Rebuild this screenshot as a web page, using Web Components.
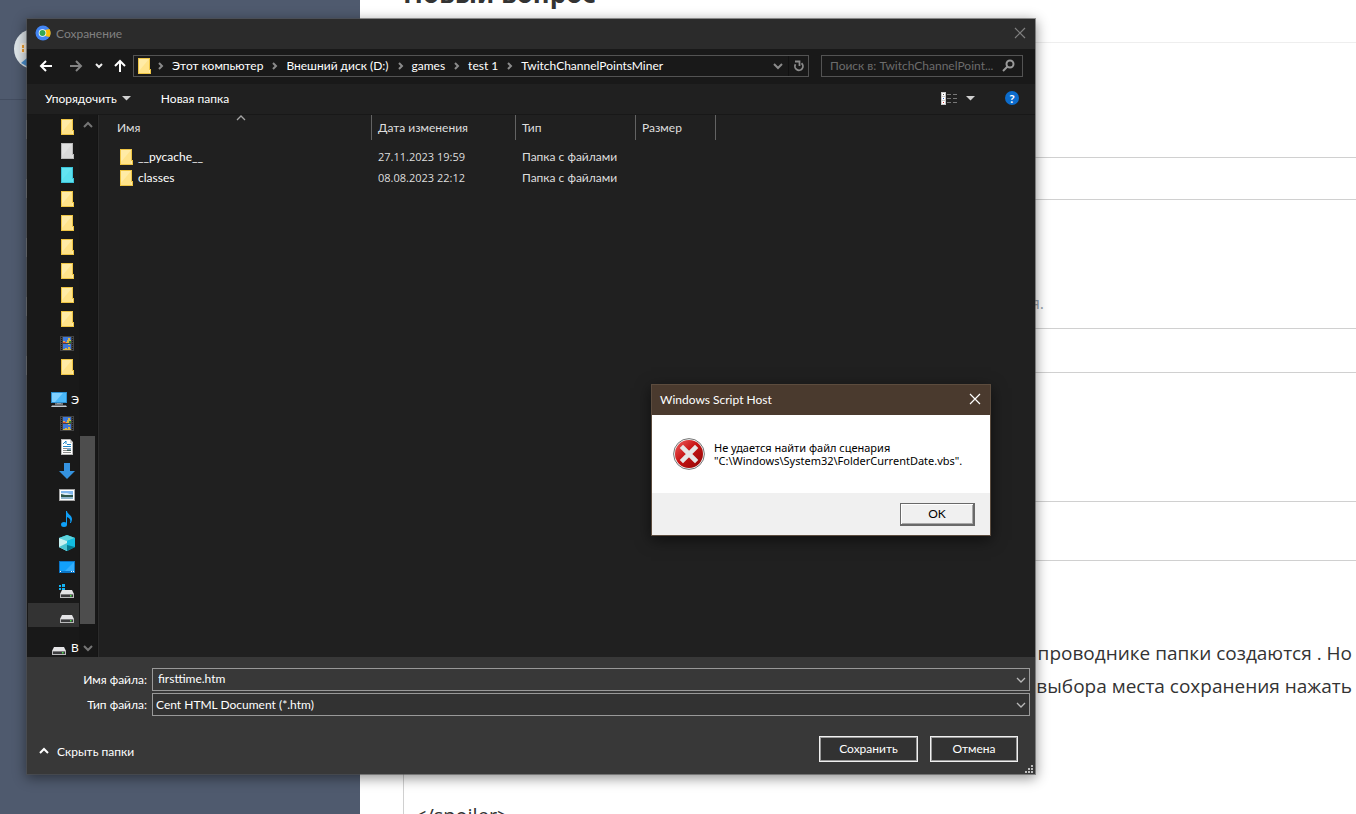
<!DOCTYPE html>
<html lang="ru">
<head>
<meta charset="utf-8">
<title>Сохранение</title>
<style>
  html, body { height: 100%; margin: 0; }
  body { overflow: hidden; background: #fff; font-family: Lato, "Noto Sans", sans-serif; font-size: 12px; }
</style>
</head>
<body>
<desk-top>
  <site-page slot="page"></site-page>
  <save-dialog slot="save"></save-dialog>
  <error-box slot="error" caption="Windows Script Host">Не удается найти файл сценария<br>"C:\Windows\System32\FolderCurrentDate.vbs".</error-box>
</desk-top>

<script>
const define = (name, html, setup) => {
  const tpl = document.createElement('template');
  tpl.innerHTML = '<style>*{box-sizing:border-box}button,input,select{font:inherit;color:inherit;margin:0}button{background:none;border:0;padding:0}svg{display:block;flex:none}</style>' + html;
  customElements.define(name, class extends HTMLElement {
    connectedCallback() {
      if (this.shadowRoot) return;
      const root = this.attachShadow({ mode: 'open' });
      root.append(tpl.content.cloneNode(true));
      if (setup) setup(this, root);
    }
  });
};

const drive = '<path d="M3 8h10l2 4H1z" fill="#e4e4e6"/><path d="M1 12h14v4H1z" fill="#b9b9bb"/><path d="M2 12.500h12v2.500H2z" fill="#3b3b3d"/><path d="M11 13h1.500v1.500H11z" fill="#4be04b"/>';
const folder = (a, b, c) => `<path d="M2 0h12v11h1v5H2z" fill="${c}"/><path d="M3 1h10v14H3z" fill="${b}"/><path d="M3 1h10L3 13z" fill="${a}"/><path d="M13 12h1v3h-1z" fill="${a}"/>`;
const ICONS = {
  folder: folder('#ffeba6', '#ffe38a', '#eec545'),
  grey: folder('#e2e2e2', '#dadada', '#b9b9b9'),
  cyan: folder('#63e4f1', '#5be0ee', '#3bc3d8'),
  video: '<path d="M1 1h14v15H1z" fill="#444"/><path d="M4 2h8v6H4z" fill="#3d78d8"/><path d="M4 9h8v6H4z" fill="#3d78d8"/><path d="M4 6h2v1h2V5h1V3h2v2h1v3H4z" fill="#d8b64a"/><path d="M4 7h3v1H4z" fill="#df4a3d"/><path d="M10 6h2v2h-2z" fill="#308a3d"/><path d="M9 9h2v1H9zM4 14h2v-1h2v1h1v-2h2v2h1v1H4z" fill="#d8b64a"/><path d="M2.500 2v14M13.500 2v14" stroke="#171717" stroke-width="1" stroke-dasharray="1 1"/>',
  pc: '<path d="M0 1h16v11H0z" fill="#2c8fd0"/><path d="M1 2h14v9H1z" fill="#4bb8f8"/><path d="M1 2h11l-8 9H1z" fill="#7fd0ff"/><path d="M6 12h4v1H6z" fill="#5d6c79"/><path d="M4 12.500h8v1H4zM1 14.500h14l1 1.500H0z" fill="#c3ccd4"/>',
  doc: '<path d="M2 0h9l3 3v13H2z" fill="#b8b8b8"/><path d="M3 1h8v3h2v11H3z" fill="#fff"/><path d="M11 0v4h3z" fill="#d5d5d5"/><path d="M4 7h8v1H4zM8 5h4v1H8z" fill="#1c86c8"/><path d="M4 5l3-3v3" stroke="#1c86c8" fill="none"/><path d="M4 9.500h4M4 11.500h4M4 13.500h8" stroke="#8c8c8c"/><path d="M8 9h4v3H8z" fill="#7fa5c4"/><path d="M8 11h4v1H8z" fill="#3e5c55"/>',
  down: '<path d="M5 0h6v8h5l-8 8-8-8h5z" fill="#3593e0"/>',
  picture: '<path d="M0 2h16v12H0z" fill="#a5a5a5"/><path d="M1 3h14v10H1z" fill="#fff"/><path d="M2 4h12v8H2z" fill="#80b7ee"/><path d="M2 6h6l6 2v1H2z" fill="#d7eaf6"/><path d="M2 7l4 1h8v2H2z" fill="#2c5549"/><path d="M2 10h12v2H2z" fill="#8fb6cd"/>',
  music: '<ellipse cx="5" cy="13.500" rx="3" ry="2.500" fill="#0fa0f8"/><path d="M7 0h1c0 3 5 4 5 8 0 2-1 3-1 4h-1c1-3 0-5-3-6v8H7z" fill="#0fa0f8"/>',
  cube: '<path d="M8 0l8 3v9l-8 4-8-4V3z" fill="#14b4d4"/><path d="M0 3l8-3 8 3-8 3z" fill="#5ed3dc"/><path d="M0 3l8 3v10l-8-4z" fill="#c8f1f1"/><path d="M8 6l8-3v9l-8-2z" fill="#12bce0"/><path d="M0 12l8-4v8z" fill="#49c3d0"/><path d="M8 10l8 2-8 4z" fill="#05798f"/>',
  desktop: '<path d="M0 2h16v12H0z" fill="#0b74c4"/><path d="M1 3h14v9H1z" fill="#12a0fa"/><path d="M15 3v9H6z" fill="#35aefc"/><path d="M1 12h1v1H1zM12 12h1v1h-1zM14 12h1v1h-1z" fill="#fff"/>',
  system: '<g transform="translate(0 -1)">' + drive + '</g><path d="M0 1h6v6H0z" fill="#191919"/><path d="M0 2h2v2H0zM3 1h3v3H3zM0 5h2v2H0zM3 5h3v2H3z" fill="#14b4f4"/>',
  drive,
  app: '<circle cx="8" cy="8" r="7.500" fill="#4285f4"/><path d="M8 5h2l4.500-1a8 8 0 0 1 0 8L10 11H8z" fill="#fbbc05"/><circle cx="7.500" cy="8" r="3.800" fill="#fff"/><circle cx="7.500" cy="8" r="3" fill="#34a853"/>',
  back: '<path d="M14 8H3M8 3L3 8l5 5" fill="none" stroke="#fff" stroke-width="2"/>',
  forward: '<path d="M2 8h11M8 3l5 5-5 5" fill="none" stroke="#838383" stroke-width="2"/>',
  up: '<path d="M8 14V3M3 8l5-5 5 5" fill="none" stroke="#fff" stroke-width="2"/>',
  chevdown: '<path d="M5 6l3 3 3-3" fill="none" stroke="#eee" stroke-width="2"/>',
  adown: '<path d="M4 6l4 4 4-4" fill="none" stroke="#8b8b8b" stroke-width="2"/>',
  sep: '<path d="M7 5l3 3-3 3" fill="none" stroke="#8b8b8b" stroke-width="2"/>',
  refresh: '<path d="M10.500 5.200a4 4 0 1 1-6 1" fill="none" stroke="#8b8b8b" stroke-width="1.800"/><path d="M4 3.500h4.500V8" fill="none" stroke="#8b8b8b" stroke-width="1.800"/>',
  search: '<circle cx="9" cy="6" r="3.500" fill="none" stroke="#9a9a9a" stroke-width="2"/><path d="M6.500 8.500L2 13" stroke="#9a9a9a" stroke-width="2"/>',
  tri: '<path d="M4 6h9l-4.500 4.500z" fill="#d0d0d0"/>',
  view: '<path d="M0 2h5v13H0z" fill="#c8c8c8"/><path d="M1 3h3v3H1zM1 7h3v3H1zM1 11h3v3H1z" fill="#fff"/><path d="M2 4h1v1H2z" fill="#555"/><path d="M2 8h1v1H2z" fill="#36c"/><path d="M2 12h1v1H2z" fill="#c33"/><path d="M6 4.500h4M12 4.500h4M6 8.500h4M12 8.500h4M6 12.500h4M12 12.500h4" stroke="#777"/>',
  close: '<path d="M3 3l10 10M13 3L3 13" stroke="currentColor" stroke-width="1.200"/>',
  caret: '<path d="M4 10l4-4 4 4" fill="none" stroke="#a5a5a5" stroke-width="1.300"/>',
  thickup: '<path d="M4 10l4-4 4 4" fill="none" stroke="currentColor" stroke-width="2"/>',
  thickdown: '<path d="M4 6l4 4 4-4" fill="none" stroke="currentColor" stroke-width="2"/>',
  thin: '<path d="M4 6l4 4 4-4" fill="none" stroke="#b8b8b8" stroke-width="1.300"/>',
  error: '<defs><linearGradient id="r" x1="0" y1="0" x2="1" y2="1"><stop offset="0" stop-color="#f06060"/><stop offset=".45" stop-color="#c81414"/><stop offset="1" stop-color="#8e0606"/></linearGradient></defs><circle cx="8" cy="8" r="7.700" fill="#f4f4f4" stroke="#777" stroke-width=".5"/><circle cx="8" cy="8" r="7" fill="url(#r)"/><path d="M5 5l6 6M11 5l-6 6" stroke="#e6e6e6" stroke-width="2.300" stroke-linecap="square"/>',
  grip: '<path d="M13 7h2v2h-2zM10 10h2v2h-2zM13 10h2v2h-2zM7 13h2v2H7zM10 13h2v2h-2zM13 13h2v2h-2z" fill="#bdbdbd"/>'
};
define('ui-icon', `<style>:host{display:block;flex:none;width:16px;height:16px}svg{width:100%;height:100%}</style><svg viewBox="0 0 16 16" aria-hidden="true"></svg>`,
  (el, root) => { root.querySelector('svg').innerHTML = ICONS[el.getAttribute('name')]; });

define('desk-top', `<style>
  :host{display:block;position:relative;height:100%;min-height:100vh;overflow:hidden}
  ::slotted([slot=save]){position:absolute;left:26px;right:320px;top:18px;bottom:39px}
  ::slotted([slot=error]){position:absolute;right:365px;top:384px}
</style><slot name="page"></slot><slot name="save"></slot><slot name="error"></slot>`);

/* The site behind the windows */
define('site-page', `<style>
  :host{display:flex;height:100%;color:#333;font-family:"Open Sans",sans-serif}
  aside{width:360px;background:#4f5a6e}
  .user{height:100px;padding:29px 14px 0;border-bottom:1px solid #434d60}
  .user svg{width:40px;height:40px}
  nav{display:grid;gap:40px;padding:20px 26px}
  nav i{width:20px;height:19px;border:1px solid #8d95a3}
  main{flex:1;min-width:0;padding-left:43px}
  h1{margin:0;height:43px;border-bottom:1px solid #eee;font:bold 26px/32px "Noto Sans",sans-serif;display:flex;align-items:flex-start}
  h1 span{margin-top:-23px}
  .field{height:43px;border:1px solid #d0d0d0;border-right:0;margin-top:114px}
  .hint{margin:0;height:128px;padding:91px 312px 0 0;text-align:right;font-size:16px;line-height:24px;color:#98a2ad}
  .field.tags{height:45px;margin:0}
  .editor{margin-top:128px;border:1px solid #d0d0d0;border-right:0;height:400px}
  .tools{height:59px;border-bottom:1px solid #d0d0d0}
  .text{padding:76px 4px 0 11px;font-size:19px;line-height:33px}
  p{margin:0;text-align:right}
  p.end{text-align:left;margin-top:96px;font-size:20px}
</style>
<aside><div class="user"><svg viewBox="0 0 40 40"><circle cx="20" cy="20" r="20" fill="#dfe6ea"/><path d="M7 34l6-5 3 10z" fill="#4a90d0"/><rect x="6" y="14" width="14" height="10" rx="2" fill="#f7efe2"/><path d="M8 16h2v3H8zM8 20h2v3H8z" fill="#f0a030"/></svg></div><nav><i></i><i></i><i></i><i></i><i></i></nav></aside>
<main><h1><span>Новый вопрос</span></h1><div class="field"></div><div class="hint">я.</div><div class="field tags"></div>
<div class="editor"><div class="tools"></div><div class="text"><p>проводнике папки создаются . Но</p><p>выбора места сохранения нажать</p><p class="end">&lt;/spoiler&gt;</p></div></div></main>`);

define('address-bar', `<style>
  :host{display:flex;flex:1;height:22px;border:1px solid #535353;align-items:center;color:#fff;min-width:0}
  ol{display:flex;flex:1;margin:0;padding:0;list-style:none;align-items:center}
  li{display:flex;align-items:center}
  li ui-icon{margin:0 4px 0 3px}
  li:first-child ui-icon{margin-left:0}
  a{color:inherit;text-decoration:none;line-height:20px}
  button{width:20px;height:20px;display:grid;place-items:center}
  button + button{border-left:1px solid #111}
  .place{margin-left:2px}
</style>
<ui-icon class="place" name="folder"></ui-icon><ol></ol>
<button aria-label="История"><ui-icon name="adown"></ui-icon></button><button aria-label="Обновить"><ui-icon name="refresh"></ui-icon></button>`,
  (el, root) => {
    root.querySelector('ol').innerHTML = el.getAttribute('path').split('/').map(p => `<li><ui-icon name="sep"></ui-icon><a href="#">${p}</a></li>`).join('');
  });

define('folder-tree', `<style>
  :host{display:grid;grid-template-columns:52px 19px;width:71px;min-height:0;overflow:hidden;background:#191919;border-right:1px solid #141414}
  ul{margin:0;padding:0;list-style:none;overflow:hidden;color:#fff}
  li{height:24px;display:flex;align-items:center;padding-left:32px}
  li.root{padding-left:24px;margin-top:8px;gap:4px}
  li.on{background:#333;margin-left:1px;padding-left:31px}
  .bar{background:#171717;display:flex;flex-direction:column;align-items:center;color:#757575;padding:2px 2px 1px 0;overflow:hidden}
  .track{flex:1;width:15px;display:flex;flex-direction:column}
  .track::before{content:"";flex:302 0 0}
  .thumb{flex:188 0 0;background:#4d4d4d}
  .track::after{content:"";flex:16 0 0}
</style><ul></ul><div class="bar"><ui-icon name="thickup"></ui-icon><div class="track"><div class="thumb"></div></div><ui-icon name="thickdown"></ui-icon></div>`,
  (el, root) => {
    const first = 'folder grey cyan folder folder folder folder folder folder video folder'.split(' ');
    const mine = 'video doc down picture music cube desktop system'.split(' ');
    const item = n => `<li><ui-icon name="${n}"></ui-icon></li>`;
    root.querySelector('ul').innerHTML = first.map(item).join('') +
      '<li class="root"><ui-icon name="pc"></ui-icon>Э</li>' + mine.map(item).join('') +
      '<li class="on"><ui-icon name="drive"></ui-icon></li><li class="root"><ui-icon name="drive"></ui-icon>В</li>';
  });

define('file-list', `<style>
  :host{display:block;flex:1;min-width:0;background:#202020;border-left:1px solid #2b2b2b;color:#dedede}
  table{table-layout:fixed;width:617px;border-collapse:separate;border-spacing:0}
  th,td{padding:0 6px;text-align:left;font-weight:400;white-space:nowrap}
  th{height:25px;border-right:1px solid #636363;position:relative}
  th:first-child{padding-left:18px}
  th ui-icon{position:absolute;left:134px;top:-5px}
  td{height:21px}
  td:first-child{padding-left:19px;color:#fff}
  td:nth-child(2){font-family:"Open Sans",sans-serif;font-size:11px}
  tbody::before{content:"";display:block;height:6px}
  span{display:flex;align-items:center;gap:4px}
</style>
<table><colgroup><col style="width:273px"><col style="width:144px"><col style="width:120px"><col style="width:80px"></colgroup>
<thead><tr><th>Имя<ui-icon name="caret"></ui-icon></th><th>Дата изменения</th><th>Тип</th><th>Размер</th></tr></thead>
<tbody><tr><td><span><ui-icon name="folder"></ui-icon>__pycache__</span></td><td>27.11.2023 19:59</td><td>Папка с файлами</td><td></td></tr>
<tr><td><span><ui-icon name="folder"></ui-icon>classes</span></td><td>08.08.2023 22:12</td><td>Папка с файлами</td><td></td></tr></tbody></table>`);

define('save-dialog', `<style>
  :host{display:flex;flex-direction:column;border:1px solid rgba(80,80,80,.6);background:#202020;background-clip:padding-box;box-shadow:0 3px 12px rgba(0,0,0,.45);color:#fff}
  header{height:30px;background:#2b2b2b;display:flex;align-items:center;padding:0 7px 2px 8px;color:#808080}
  header span{flex:1;margin-left:5px}
  .nav{height:35px;background:#191919;display:flex;align-items:center;padding:0 12px 2px 10px}
  .nav button{width:18px;height:22px;display:grid;place-items:center;margin-right:12px}
  .nav button.fwd{margin-right:6px}
  .nav button.sm{width:16px;margin-right:4px}
  .nav button.up{margin-right:4px}
  .search{display:flex;align-items:center;width:202px;height:22px;border:1px solid #535353;margin-left:12px;padding:0 5px 0 8px}
  .search input{flex:1;min-width:0;width:100px;background:none;border:0;padding:0;outline:0}
  .search input::placeholder{color:#6c6c6c;opacity:1}
  .tools{height:31px;border-bottom:1px solid #181818;display:flex;align-items:center;padding:0 16px 2px 18px}
  .tools button{display:flex;align-items:center;gap:1px}
  .tools .new{margin:0 auto 0 27px}
  .view{margin-right:27px}
  .view ui-icon + ui-icon{margin-left:4px}
  .tools .help{width:14px;height:14px;border-radius:50%;background:#0c6ccc;font-weight:700;justify-content:center}
  .body{flex:1;min-height:0;display:flex}
  footer{height:117px;background:#383838;display:flex;flex-direction:column}
  .form{display:grid;grid-template-columns:120px 1fr;column-gap:5px;row-gap:2px;padding:11px 5px 0 0;align-items:center}
  label{text-align:right}
  .box{display:grid;grid-template-columns:1fr 16px;align-items:center;height:23px;border:1px solid #999}
  .box > *{grid-row:1}
  .box input,.box select{grid-column:1/3;width:100%;height:21px;background:none;border:0;outline:0;padding:0 20px 2px 5px;appearance:none}
  .box select{padding:0 20px 0 3px;background:#323232}
  .box ui-icon{grid-column:2;pointer-events:none}
  .actions{flex:1;display:flex;align-items:center;gap:12px;padding:7px 1px 0 9px}
  .hide{display:flex;align-items:center;gap:5px;margin-right:auto;padding-top:5px}
  .act{height:26px;width:88px;border:1px solid #f0f0f0;box-shadow:inset 0 0 0 1px #999;background:#323232}
  .act.save{width:99px}
  .grip{align-self:flex-end;margin-left:-12px}
</style>
<header><ui-icon name="app"></ui-icon><span>Сохранение</span><button aria-label="Закрыть"><ui-icon name="close"></ui-icon></button></header>
<div class="nav"><button aria-label="Назад"><ui-icon name="back"></ui-icon></button><button class="fwd" aria-label="Вперед"><ui-icon name="forward"></ui-icon></button><button class="sm" aria-label="Недавние"><ui-icon name="chevdown"></ui-icon></button><button class="up" aria-label="Вверх"><ui-icon name="up"></ui-icon></button>
<address-bar path="Этот компьютер/Внешний диск (D:)/games/test 1/TwitchChannelPointsMiner"></address-bar>
<div class="search"><input aria-label="Поиск" placeholder="Поиск в: TwitchChannelPoint..."><ui-icon name="search"></ui-icon></div></div>
<div class="tools"><button>Упорядочить<ui-icon name="tri"></ui-icon></button><button class="new">Новая папка</button><button class="view" aria-label="Вид"><ui-icon name="view"></ui-icon><ui-icon name="tri"></ui-icon></button><button class="help">?</button></div>
<div class="body"><folder-tree></folder-tree><file-list></file-list></div>
<footer><div class="form"><label for="n">Имя файла:</label><div class="box"><input id="n" value="firsttime.htm"><ui-icon name="thin"></ui-icon></div>
<label for="t">Тип файла:</label><div class="box"><select id="t"><option>Cent HTML Document (*.htm)</option></select><ui-icon name="thin"></ui-icon></div></div>
<div class="actions"><button class="hide"><ui-icon name="thickup"></ui-icon>Скрыть папки</button><button class="act save">Сохранить</button><button class="act">Отмена</button><ui-icon class="grip" name="grip"></ui-icon></div></footer>`);

define('error-box', `<style>
  :host{display:block;box-sizing:border-box;width:340px;border:1px solid #5c4c3e;background:#fff;color:#000;box-shadow:0 4px 14px rgba(0,0,0,.55)}
  header{height:30px;background:#4a3a2e;color:#fff;display:flex;align-items:center;justify-content:space-between;padding:0 7px 2px 8px}
  .msg{height:78px;display:flex;align-items:center;gap:9px;padding:0 21px;font:11px/13px "Noto Sans",sans-serif;white-space:nowrap}
  .msg ui-icon{width:32px;height:32px}
  footer{height:42px;background:#f0f0f0;display:flex;align-items:center;justify-content:flex-end;padding-right:15px}
  footer button{width:75px;height:23px;border:1px solid #696969;border-width:1px 2px 2px 1px;background:#f0f0f0;box-shadow:inset 1px 1px #fff,inset -1px -1px #a8a8a8}
</style><header><span></span><button aria-label="Закрыть"><ui-icon name="close"></ui-icon></button></header>
<div class="msg"><ui-icon name="error"></ui-icon><div><slot></slot></div></div><footer><button>OK</button></footer>`,
  (el, root) => { root.querySelector('header span').textContent = el.getAttribute('caption'); });
</script>
</body>
</html>
